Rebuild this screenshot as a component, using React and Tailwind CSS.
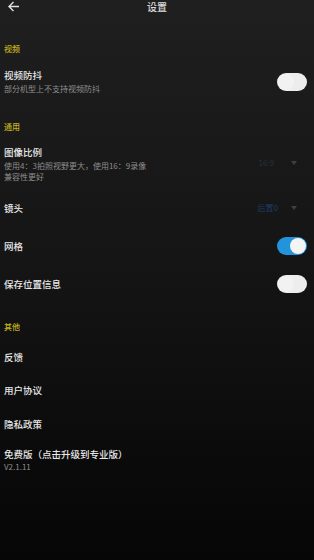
import React, { useState } from 'react';

const font = { fontFamily: '"Noto Sans CJK SC", "Noto Sans", sans-serif' };

const Toggle = ({ on, onClick }) => (
  <button
    onClick={onClick}
    className={`relative w-[30px] h-[18px] rounded-full shrink-0 ${on ? 'bg-[#2394dc]' : 'bg-[#ededed]'}`}
  >
    <span
      className={`absolute top-[1px] w-[16px] h-[16px] rounded-full ${on ? 'right-[1px] bg-[#f4f4f4]' : 'left-[1px] bg-[#f2f2f2]'}`}
    />
  </button>
);

const Caret = () => (
  <svg width="6" height="4" viewBox="0 0 6 4" className="ml-[17px]">
    <path d="M0 0 L6 0 L3 4 Z" fill="#3c4048" />
  </svg>
);

const Section = ({ children, className }) => (
  <div className={`text-[8px] leading-[12px] text-[#c4b21c] font-medium ${className}`}>{children}</div>
);

const App = () => {
  const [stab, setStab] = useState(false);
  const [grid, setGrid] = useState(true);
  const [loc, setLoc] = useState(false);

  return (
    <div
      style={font}
      className="w-[314px] h-[560px] overflow-hidden bg-gradient-to-b from-[#1f1f1f] via-[#141414] to-[#060606] text-[#e8e8e8] flex flex-col"
    >
      <div className="relative h-[14px] flex items-center justify-center">
        <svg width="12" height="11" viewBox="0 0 12 11" className="absolute left-[8px] top-[1px]">
          <path d="M11 5.5 H1.5 M5.5 1 L1 5.5 L5.5 10" stroke="#e0e0e0" strokeWidth="1.4" fill="none" />
        </svg>
        <span className="text-[10px] leading-[14px] font-medium text-[#dcdcdc]">设置</span>
      </div>

      <div className="px-[4px] flex flex-col">
        <Section className="mt-[29px]">视频</Section>
        <div className="mt-[14px] flex items-center pr-[3px]">
          <div className="flex-1">
            <div className="text-[9.5px] leading-[12px] font-medium">视频防抖</div>
            <div className="mt-[2px] text-[8px] leading-[12px] text-[#8e8e8e]">部分机型上不支持视频防抖</div>
          </div>
          <Toggle on={stab} onClick={() => setStab(!stab)} />
        </div>

        <Section className="mt-[26px]">通用</Section>
        <div className="mt-[13px] flex items-center pr-[13px]">
          <div className="flex-1">
            <div className="text-[9.5px] leading-[12px] font-medium">图像比例</div>
            <div className="mt-[2px] text-[8px] leading-[11px] text-[#8e8e8e] w-[150px]">
              使用4：3拍照视野更大，使用16：9录像兼容性更好
            </div>
          </div>
          <div className="flex items-center -mt-[3px]">
            <span className="text-[8px] leading-[10px] text-[#2a313d]">16:9</span>
            <Caret />
          </div>
        </div>

        <div className="mt-[20px] flex items-center pr-[13px]">
          <div className="flex-1 text-[9.5px] leading-[12px] font-medium">镜头</div>
          <div className="flex items-center">
            <span className="text-[8px] leading-[10px] text-[#1c3e64]">后置0</span>
            <svg width="6" height="4" viewBox="0 0 6 4" className="ml-[13px]">
              <path d="M0 0 L6 0 L3 4 Z" fill="#3c4048" />
            </svg>
          </div>
        </div>

        <div className="mt-[23px] flex items-center pr-[3px] h-[18px]">
          <div className="flex-1 text-[9.5px] leading-[12px] font-medium">网格</div>
          <Toggle on={grid} onClick={() => setGrid(!grid)} />
        </div>

        <div className="mt-[20px] flex items-center pr-[3px] h-[18px]">
          <div className="flex-1 text-[9.5px] leading-[12px] font-medium">保存位置信息</div>
          <Toggle on={loc} onClick={() => setLoc(!loc)} />
        </div>

        <Section className="mt-[28px]">其他</Section>
        <div className="mt-[18px] text-[9.5px] leading-[12px] font-medium">反馈</div>
        <div className="mt-[21px] text-[9.5px] leading-[12px] font-medium">用户协议</div>
        <div className="mt-[22px] text-[9.5px] leading-[12px] font-medium">隐私政策</div>
        <div className="mt-[18px] text-[9.5px] leading-[12px] font-medium">免费版（点击升级到专业版）</div>
        <div className="mt-[1px] text-[8px] leading-[11px] text-[#8e8e8e]">V2.1.11</div>
      </div>
    </div>
  );
};

export default App;
